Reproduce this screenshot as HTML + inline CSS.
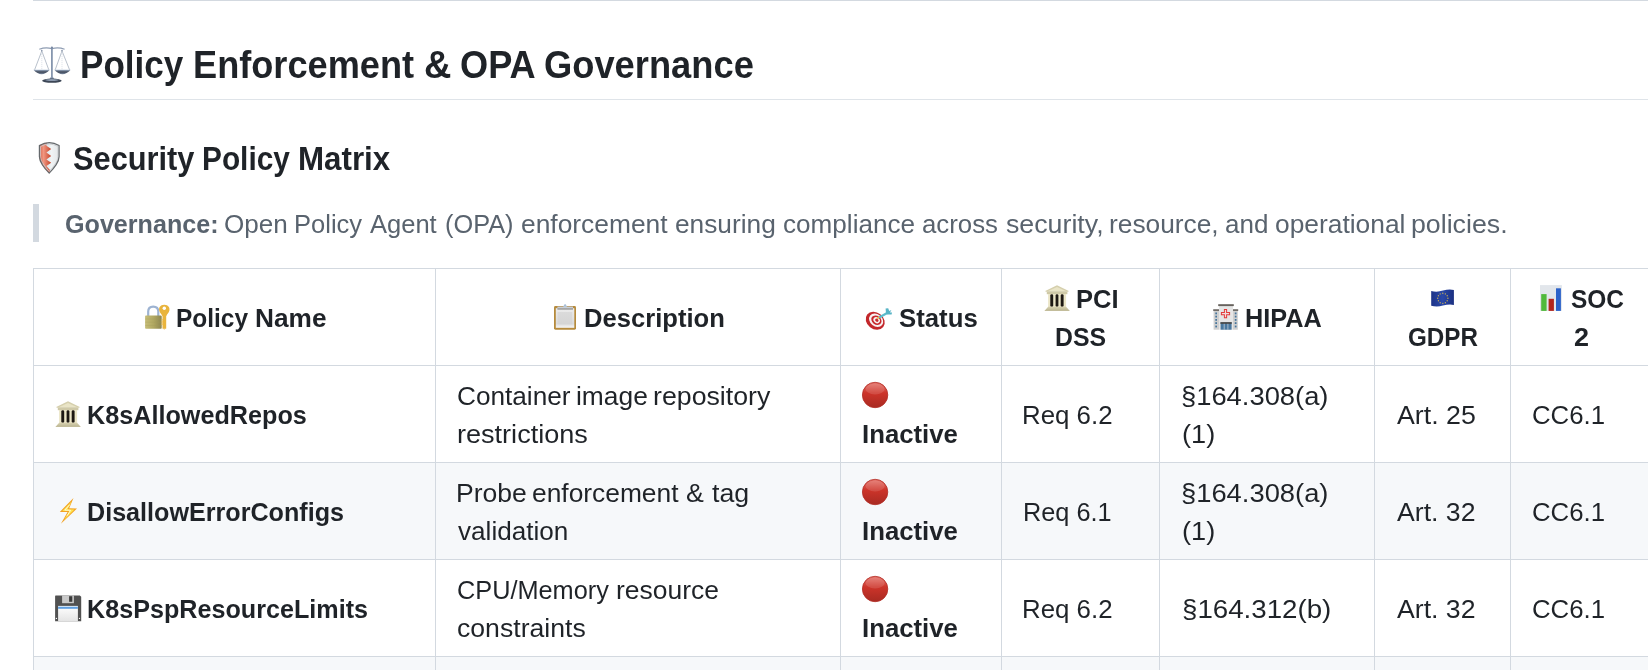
<!DOCTYPE html>
<html>
<head>
<meta charset="utf-8">
<title>Policy Enforcement &amp; OPA Governance</title>
<style>
html,body{margin:0;padding:0;background:#fff;}
body{width:1648px;height:670px;overflow:hidden;position:relative;font-family:"Liberation Sans",sans-serif;color:#1f2328;}
.ln{position:absolute;background:#d3d9e0;}
.bg{position:absolute;left:34px;width:1614px;height:96px;background:#f6f8fa;}
.x{position:absolute;white-space:nowrap;line-height:1;transform-origin:0 0;font-family:"Liberation Sans",sans-serif;}
.a{font-size:38.4px;font-weight:bold;}
.b{font-size:32.6px;font-weight:bold;}
.c{font-size:25.6px;font-weight:bold;}
.d{font-size:25.6px;font-weight:normal;}
#txt{position:absolute;left:0;top:0;width:1648px;height:670px;will-change:transform;}
svg.e{position:absolute;overflow:visible;}
</style>
</head>
<body>
<!-- top rule, h2 underline, blockquote bar -->
<div class="ln" style="left:33px;top:0;width:1615px;height:1px"></div>
<div class="ln" style="left:33px;top:99px;width:1615px;height:1px;background:#dfe4e9"></div>
<div class="ln" style="left:33px;top:204px;width:6px;height:38px"></div>
<!-- table grid -->
<div class="bg" style="top:463px"></div>
<div class="bg" style="top:657px"></div>
<div class="ln" style="left:33px;top:268px;width:1615px;height:1px"></div>
<div class="ln" style="left:33px;top:365px;width:1615px;height:1px"></div>
<div class="ln" style="left:33px;top:462px;width:1615px;height:1px"></div>
<div class="ln" style="left:33px;top:559px;width:1615px;height:1px"></div>
<div class="ln" style="left:33px;top:656px;width:1615px;height:1px"></div>
<div class="ln" style="left:33px;top:268px;width:1px;height:402px"></div>
<div class="ln" style="left:435px;top:268px;width:1px;height:402px"></div>
<div class="ln" style="left:840px;top:268px;width:1px;height:402px"></div>
<div class="ln" style="left:1001px;top:268px;width:1px;height:402px"></div>
<div class="ln" style="left:1159px;top:268px;width:1px;height:402px"></div>
<div class="ln" style="left:1374px;top:268px;width:1px;height:402px"></div>
<div class="ln" style="left:1510px;top:268px;width:1px;height:402px"></div>
<div id="txt">
<span class="x a" style="left:79.51px;top:46.00px;transform:scaleX(0.9129)">Policy</span>
<span class="x a" style="left:193.04px;top:46.00px;transform:scaleX(0.9422)">Enforcement</span>
<span class="x a" style="left:424.11px;top:46.00px;transform:scaleX(0.9884)">&amp;</span>
<span class="x a" style="left:459.87px;top:46.00px;transform:scaleX(0.9422)">OPA</span>
<span class="x a" style="left:544.37px;top:46.00px;transform:scaleX(0.9458)">Governance</span>
<span class="x b" style="left:73.27px;top:143.00px;transform:scaleX(0.9447)">Security</span>
<span class="x b" style="left:201.88px;top:143.00px;transform:scaleX(0.9156)">Policy</span>
<span class="x b" style="left:298.04px;top:143.00px;transform:scaleX(0.9609)">Matrix</span>
<span class="x c" style="left:64.71px;top:212.00px;color:#59636e;transform:scaleX(0.9816)">Governance:</span>
<span class="x d" style="left:223.78px;top:212.00px;color:#59636e;transform:scaleX(1.0185)">Open</span>
<span class="x d" style="left:293.81px;top:212.00px;color:#59636e;transform:scaleX(0.9972)">Policy</span>
<span class="x d" style="left:370.20px;top:212.00px;color:#59636e;transform:scaleX(0.9972)">Agent</span>
<span class="x d" style="left:444.81px;top:212.00px;color:#59636e;transform:scaleX(0.9897)">(OPA)</span>
<span class="x d" style="left:520.58px;top:212.00px;color:#59636e;transform:scaleX(1.0305)">enforcement</span>
<span class="x d" style="left:675.18px;top:212.00px;color:#59636e;transform:scaleX(1.0264)">ensuring</span>
<span class="x d" style="left:782.68px;top:212.00px;color:#59636e;transform:scaleX(1.0200)">compliance</span>
<span class="x d" style="left:921.89px;top:212.00px;color:#59636e;transform:scaleX(1.0081)">across</span>
<span class="x d" style="left:1005.68px;top:212.00px;color:#59636e;transform:scaleX(1.0450)">security,</span>
<span class="x d" style="left:1109.06px;top:212.00px;color:#59636e;transform:scaleX(1.0281)">resource,</span>
<span class="x d" style="left:1224.99px;top:212.00px;color:#59636e;transform:scaleX(1.0154)">and</span>
<span class="x d" style="left:1275.08px;top:212.00px;color:#59636e;transform:scaleX(1.0299)">operational</span>
<span class="x d" style="left:1411.43px;top:212.00px;color:#59636e;transform:scaleX(1.0443)">policies.</span>
<span class="x c" style="left:176.17px;top:306.00px;transform:scaleX(0.9557)">Policy</span>
<span class="x c" style="left:254.86px;top:306.00px;transform:scaleX(1.0254)">Name</span>
<span class="x c" style="left:584.30px;top:306.00px;transform:scaleX(1.0001)">Description</span>
<span class="x c" style="left:899.00px;top:306.00px;transform:scaleX(1.0065)">Status</span>
<span class="x c" style="left:1075.81px;top:287.00px;transform:scaleX(0.9959)">PCI</span>
<span class="x c" style="left:1055.15px;top:325.00px;transform:scaleX(0.9710)">DSS</span>
<span class="x c" style="left:1244.92px;top:306.00px;transform:scaleX(0.9873)">HIPAA</span>
<span class="x c" style="left:1407.54px;top:325.00px;transform:scaleX(0.9467)">GDPR</span>
<span class="x c" style="left:1571.12px;top:287.00px;transform:scaleX(0.9563)">SOC</span>
<span class="x c" style="left:1573.56px;top:325.00px;transform:scaleX(1.0547)">2</span>
<span class="x c" style="left:86.92px;top:403.00px;transform:scaleX(0.9846)">K8sAllowedRepos</span>
<span class="x d" style="left:456.87px;top:384.00px;transform:scaleX(1.0230)">Container</span>
<span class="x d" style="left:576.05px;top:384.00px;transform:scaleX(1.0300)">image</span>
<span class="x d" style="left:653.23px;top:384.00px;transform:scaleX(1.0442)">repository</span>
<span class="x d" style="left:456.51px;top:422.00px;transform:scaleX(1.0572)">restrictions</span>
<span class="x c" style="left:861.99px;top:422.00px;transform:scaleX(1.0064)">Inactive</span>
<span class="x d" style="left:1022.48px;top:403.00px;transform:scaleX(1.0101)">Req 6.2</span>
<span class="x d" style="left:1181.12px;top:384.00px;transform:scaleX(1.0683)">§164.308(a)</span>
<span class="x d" style="left:1181.73px;top:422.00px;transform:scaleX(1.0604)">(1)</span>
<span class="x d" style="left:1397.20px;top:403.00px;transform:scaleX(1.0461)">Art. 25</span>
<span class="x d" style="left:1531.59px;top:403.00px;transform:scaleX(1.0068)">CC6.1</span>
<span class="x c" style="left:86.93px;top:500.00px;transform:scaleX(0.9823)">DisallowErrorConfigs</span>
<span class="x d" style="left:456.13px;top:481.00px;transform:scaleX(1.0372)">Probe</span>
<span class="x d" style="left:532.28px;top:481.00px;transform:scaleX(1.0298)">enforcement</span>
<span class="x d" style="left:686.46px;top:481.00px;transform:scaleX(1.0438)">&amp;</span>
<span class="x d" style="left:712.10px;top:481.00px;transform:scaleX(1.0454)">tag</span>
<span class="x d" style="left:458.20px;top:519.00px;transform:scaleX(1.0204)">validation</span>
<span class="x c" style="left:861.99px;top:519.00px;transform:scaleX(1.0064)">Inactive</span>
<span class="x d" style="left:1022.52px;top:500.00px;transform:scaleX(0.9882)">Req 6.1</span>
<span class="x d" style="left:1181.12px;top:481.00px;transform:scaleX(1.0683)">§164.308(a)</span>
<span class="x d" style="left:1181.73px;top:519.00px;transform:scaleX(1.0604)">(1)</span>
<span class="x d" style="left:1397.20px;top:500.00px;transform:scaleX(1.0407)">Art. 32</span>
<span class="x d" style="left:1531.59px;top:500.00px;transform:scaleX(1.0068)">CC6.1</span>
<span class="x c" style="left:86.93px;top:597.00px;transform:scaleX(0.9829)">K8sPspResourceLimits</span>
<span class="x d" style="left:457.01px;top:578.00px;transform:scaleX(0.9888)">CPU/Memory</span>
<span class="x d" style="left:616.44px;top:578.00px;transform:scaleX(1.0344)">resource</span>
<span class="x d" style="left:457.37px;top:616.00px;transform:scaleX(1.0402)">constraints</span>
<span class="x c" style="left:861.99px;top:616.00px;transform:scaleX(1.0064)">Inactive</span>
<span class="x d" style="left:1022.48px;top:597.00px;transform:scaleX(1.0101)">Req 6.2</span>
<span class="x d" style="left:1181.60px;top:597.00px;transform:scaleX(1.0816)">§164.312(b)</span>
<span class="x d" style="left:1397.20px;top:597.00px;transform:scaleX(1.0407)">Art. 32</span>
<span class="x d" style="left:1531.59px;top:597.00px;transform:scaleX(1.0068)">CC6.1</span>
</div>
<!-- emoji -->
<svg class="e" style="left:0;top:0" width="1648" height="670" viewBox="0 0 1648 670">
<defs>
<linearGradient id="gRed" x1="0" y1="0" x2="0" y2="1"><stop offset="0" stop-color="#e4746b"/><stop offset="0.42" stop-color="#cd342a"/><stop offset="1" stop-color="#a82a22"/></linearGradient>
<linearGradient id="gLock" x1="0" y1="0" x2="1" y2="0"><stop offset="0" stop-color="#c6bd78"/><stop offset="0.5" stop-color="#b1a862"/><stop offset="1" stop-color="#8d8650"/></linearGradient>
<linearGradient id="gShR" x1="0" y1="0" x2="1" y2="0"><stop offset="0" stop-color="#dd6044"/><stop offset="0.35" stop-color="#f09680"/><stop offset="1" stop-color="#c6442a"/></linearGradient>
<linearGradient id="gShW" x1="0" y1="0" x2="1" y2="0"><stop offset="0" stop-color="#b5cdd6"/><stop offset="0.6" stop-color="#f1f4f5"/><stop offset="1" stop-color="#e3e6e8"/></linearGradient>
<linearGradient id="gPan" x1="0" y1="0" x2="0" y2="1"><stop offset="0" stop-color="#9fb2cb"/><stop offset="0.5" stop-color="#3e4757"/><stop offset="1" stop-color="#7d8ca3"/></linearGradient>
<linearGradient id="gPaper" x1="0" y1="0" x2="0" y2="1"><stop offset="0" stop-color="#ececec"/><stop offset="0.8" stop-color="#dcdcdc"/><stop offset="1" stop-color="#f6f6f6"/></linearGradient>
<linearGradient id="gLabel" x1="0" y1="0" x2="0" y2="1"><stop offset="0" stop-color="#ffffff"/><stop offset="1" stop-color="#e4e4e4"/></linearGradient>
<linearGradient id="gFlag" x1="0" y1="0" x2="1" y2="0"><stop offset="0" stop-color="#1d3488"/><stop offset="0.5" stop-color="#2a48a8"/><stop offset="1" stop-color="#1b2f80"/></linearGradient>
<g id="bank">
<path d="M1045.2,290.9 L1057,285.3 L1068.8,290.9 L1068.2,291.8 L1045.8,291.8 Z" fill="#d5cfad"/>
<path d="M1048.2,291 L1057,286.9 L1065.8,291 Z" fill="#e9e4c6"/>
<rect x="1046.8" y="291.6" width="20.6" height="2.6" fill="#cfc9a7"/>
<rect x="1048.1" y="294" width="18" height="13" fill="#ece6c8"/>
<rect x="1050.3" y="294.2" width="2.9" height="12.6" rx="1.3" fill="#1d1813"/>
<rect x="1055.6" y="294.2" width="2.8" height="12.6" rx="1.3" fill="#1d1813"/>
<rect x="1060.7" y="294.2" width="2.9" height="12.6" rx="1.3" fill="#1d1813"/>
<path d="M1048.1,306.8 L1066.1,306.8 L1069.7,310.9 L1044.5,310.9 Z" fill="#d2ccaa"/>
<path d="M1047,308.6 L1067.3,308.6 L1069.7,310.9 L1044.5,310.9 Z" fill="#c3bd9b"/>
</g>
<g id="dot">
<circle cx="875.1" cy="395" r="12.7" fill="url(#gRed)" stroke="#b22c25" stroke-width="0.8"/>
<ellipse cx="875.1" cy="389" rx="9.6" ry="5.4" fill="#fff" opacity="0.13"/>
</g>
</defs>

<!-- scales -->
<g>
<path d="M41.8,51 L34.6,69.8 M41.8,51 L48.8,69.8 M62,51 L55.2,69.8 M62,51 L69.6,69.8" stroke="#9aa5b4" stroke-width="0.7" fill="none"/>
<path d="M41.8,52 L41.8,70 M62,52 L62,70" stroke="#d3dae3" stroke-width="0.7" fill="none" stroke-dasharray="1.2 0.8"/>
<path d="M39.3,49.2 Q45.5,46.9 51.9,48.6 Q58.5,46.9 64.6,49.2" stroke="#8e9cb2" stroke-width="1.1" fill="none"/>
<circle cx="41.8" cy="50.6" r="0.8" fill="#8492a8"/><circle cx="62" cy="50.6" r="0.8" fill="#8492a8"/>
<rect x="51.05" y="47" width="1.7" height="32.2" fill="#8091ab"/>
<circle cx="51.9" cy="47.6" r="1.1" fill="#7a8aa4"/>
<path d="M49.4,79.2 Q51.9,74 54.4,79.2 Z" fill="#8797af"/>
<path d="M33.4,69.8 L49.8,69.8 Q41.6,78.6 33.4,69.8 Z" fill="url(#gPan)"/>
<path d="M54.3,69.8 L70.7,69.8 Q62.5,78.6 54.3,69.8 Z" fill="url(#gPan)"/>
<ellipse cx="51.9" cy="80.7" rx="9.8" ry="2.1" fill="#3d4756"/>
<ellipse cx="51.9" cy="80" rx="6.6" ry="0.8" fill="#a7b7cd"/>
</g>

<!-- shield -->
<g>
<path d="M39.4,145.6 Q49.2,139.8 59.1,145.6 L59.1,156.6 C58.9,160.4 57.8,162.4 56.2,164.7 C54.2,167.7 51.9,170.5 49.2,173.1 C46.5,170.5 44.2,167.7 42.3,164.7 C40.7,162.4 39.6,160.4 39.4,156.6 Z" fill="url(#gShW)"/>
<path d="M39.4,145.6 Q43.2,143.4 46.8,142.8 L46.4,145.8 L51.2,149 L46.4,152.6 L51.2,155.9 L46.4,159.5 L51.2,162.8 L46.4,166.1 L50.2,170.2 L49.2,173.1 C46.5,170.5 44.2,167.7 42.3,164.7 C40.7,162.4 39.6,160.4 39.4,156.6 Z" fill="url(#gShR)"/>
<path d="M40.6,146.5 Q49.2,141.6 57.9,146.5 L57.9,156.5 C57.7,159.8 56.7,161.8 55.2,164 C53.4,166.7 51.5,169.1 49.2,171.4 C46.9,169.1 45,166.7 43.3,164 C41.8,161.8 40.8,159.8 40.6,156.5 Z" fill="none" stroke="#c9cdd0" stroke-width="1" opacity="0.85"/>
<path d="M39.4,145.6 Q49.2,139.8 59.1,145.6 L59.1,156.6 C58.9,160.4 57.8,162.4 56.2,164.7 C54.2,167.7 51.9,170.5 49.2,173.1 C46.5,170.5 44.2,167.7 42.3,164.7 C40.7,162.4 39.6,160.4 39.4,156.6 Z" fill="none" stroke="#65696c" stroke-width="1.2"/>
</g>

<!-- lock with key -->
<g>
<path d="M148.2,316.5 L148.2,311.6 Q148.2,306.6 153.2,306.6 Q158.3,306.6 158.3,311.6 L158.3,316.5" fill="none" stroke="#9db3d2" stroke-width="2.2"/>
<rect x="145.1" y="315.6" width="16.6" height="13.1" rx="0.8" fill="url(#gLock)"/>
<path d="M145.1,319 H161.7 M145.1,322.2 H161.7 M145.1,325.4 H161.7" stroke="#a39a58" stroke-width="0.5" opacity="0.6"/>
<path d="M164.3,304.8 C168.6,304.8 170,308 169.4,310.6 C168.8,313 167,314.6 166.2,316 L162.5,316 C161.6,314.6 159.8,313 159.2,310.6 C158.6,308 160,304.8 164.3,304.8 Z" fill="#e9b43c"/>
<rect x="162.5" y="314" width="3.7" height="14.6" fill="#e9b43c"/>
<path d="M162.5,319 L160.9,319.8 L162.5,320.8 L160.9,322 L162.5,323 L160.9,324.2 L162.5,325.2 Z" fill="#e9b43c"/>
<path d="M162.5,328.6 L164.3,329.6 L166.2,328.6 Z" fill="#e9b43c"/>
<circle cx="164.3" cy="308.3" r="1.7" fill="#fff"/>
</g>

<!-- clipboard -->
<g>
<rect x="554" y="306.1" width="22" height="23.6" rx="1.4" fill="#b68b3d"/>
<rect x="555.8" y="308.2" width="18.5" height="19.6" fill="url(#gPaper)"/>
<rect x="557.6" y="312" width="14.6" height="12.4" fill="#cfcfcf" opacity="0.55"/>
<path d="M563.2,307 Q565.1,300.8 567,307 Z" fill="#a9c0d8"/>
<rect x="557.4" y="306.6" width="15.6" height="1.7" fill="#c7ced6"/>
<rect x="557.4" y="308.2" width="15.6" height="1.5" fill="#9b9b9b"/>
</g>

<!-- dart -->
<g>
<g transform="rotate(38 875.2 320.8)">
<ellipse cx="875.2" cy="320.8" rx="10.2" ry="8.3" fill="#c3272b"/>
<ellipse cx="875.6" cy="319.8" rx="7.6" ry="6.1" fill="#f7f1f1"/>
<ellipse cx="875.8" cy="319.6" rx="5.5" ry="4.4" fill="#c8282c"/>
<ellipse cx="876" cy="319.4" rx="3.5" ry="2.8" fill="#f7f1f1"/>
<ellipse cx="876.1" cy="319.3" rx="1.8" ry="1.5" fill="#c8282c"/>
</g>
<path d="M877.2,318.6 L880.2,316.6" stroke="#e8c040" stroke-width="1.3"/>
<path d="M880,316.9 L887.2,313" stroke="#5cbccc" stroke-width="2.3" stroke-linecap="round"/>
<path d="M886,313.4 L885.6,308.6 L888.2,308.2 L889.2,311 L891.4,310 L890,312.6 L892,312.6 L891.6,314.4 L887,314.6 Z" fill="#58b4c6"/>
</g>

<!-- bank (PCI header) and bank (row 1) -->
<use href="#bank"/>
<use href="#bank" transform="translate(-989 116)"/>

<!-- hospital -->
<g>
<rect x="1213.6" y="309.6" width="5.6" height="20.1" fill="#cfcfcf"/>
<rect x="1232.8" y="309.6" width="5" height="20.1" fill="#cfcfcf"/>
<rect x="1213.2" y="309.3" width="6" height="1.6" fill="#67625d"/>
<rect x="1232.8" y="309.3" width="5.4" height="1.6" fill="#67625d"/>
<rect x="1219" y="304.8" width="14" height="24.9" fill="#e6e6e6"/>
<rect x="1218.2" y="304.2" width="15.6" height="1.9" fill="#67625d"/>
<g fill="#46759c">
<rect x="1215.3" y="312.5" width="1.7" height="1.8"/><rect x="1215.3" y="315.7" width="1.7" height="1.8"/><rect x="1215.3" y="319" width="1.7" height="1.8"/><rect x="1215.3" y="322.2" width="1.7" height="1.8"/><rect x="1215.3" y="325.6" width="1.7" height="1.8"/>
<rect x="1234.8" y="312.5" width="1.7" height="1.8"/><rect x="1234.8" y="315.7" width="1.7" height="1.8"/><rect x="1234.8" y="319" width="1.7" height="1.8"/><rect x="1234.8" y="322.2" width="1.7" height="1.8"/><rect x="1234.8" y="325.6" width="1.7" height="1.8"/>
</g>
<path d="M1223.9,309 h3.2 v3 h3 v3.2 h-3 v3 h-3.2 v-3 h-3 v-3.2 h3 Z" fill="#e23b3b"/>
<path d="M1224.9,310 h1.2 v3 h3 v1.2 h-3 v3 h-1.2 v-3 h-3 v-1.2 h3 Z" fill="#f1dcdc"/>
<rect x="1220.6" y="322.4" width="11" height="7.3" fill="#4a789f"/>
<rect x="1220.4" y="322.2" width="11.4" height="1.6" fill="#4a4540"/>
<path d="M1224.2,323.8 V329.7 M1227.9,323.8 V329.7" stroke="#d5dde4" stroke-width="0.7"/>
</g>

<!-- EU flag -->
<g>
<path d="M1431.2,291 Q1437,292.6 1443,290.6 Q1449.5,288.8 1453.9,290.1 L1453.9,305 Q1449.5,303.8 1443,305.6 Q1437,307.4 1431.2,305.8 Z" fill="url(#gFlag)"/>
<g fill="#c7ad55">
<circle cx="1442.8" cy="293.2" r="0.68"/><circle cx="1445.4" cy="293.9" r="0.68"/><circle cx="1447.2" cy="295.7" r="0.68"/><circle cx="1447.9" cy="298.3" r="0.68"/><circle cx="1447.2" cy="300.8" r="0.68"/><circle cx="1445.4" cy="302.7" r="0.68"/><circle cx="1442.8" cy="303.4" r="0.68"/><circle cx="1440.2" cy="302.7" r="0.68"/><circle cx="1438.4" cy="300.8" r="0.68"/><circle cx="1437.7" cy="298.3" r="0.68"/><circle cx="1438.4" cy="295.7" r="0.68"/><circle cx="1440.2" cy="293.9" r="0.68"/>
</g>
</g>

<!-- bar chart -->
<g>
<rect x="1540" y="285.1" width="21.9" height="25.8" fill="#e2e6eb"/>
<rect x="1541.2" y="294.1" width="5.4" height="16.8" fill="#50b93b"/>
<rect x="1548.6" y="298.8" width="5.3" height="12.1" fill="#b3241c"/>
<rect x="1556" y="288.3" width="4.9" height="22.6" fill="#2b61c9"/>
</g>

<!-- lightning -->
<g>
<path d="M73.5,498 L59.8,511.9 L67.6,511.9 L60.9,523.7 L77,508.5 L69.2,508.3 Z" fill="#f2a324"/>
<path d="M71.6,501.6 L62.3,510.9 L69.4,510.9 L64,520 L74.4,509.5 L67.6,509.3 Z" fill="#ffe450"/>
<path d="M69.6,504.8 L64.8,510.1 L70.6,510.3 L67,515.8" fill="none" stroke="#fffbe0" stroke-width="0.9"/>
</g>

<!-- floppy -->
<g>
<path d="M55.8,595.4 L79.8,595.4 L81.2,596.8 L81.2,621.2 L55.1,621.2 L55.1,596.1 Q55.1,595.4 55.8,595.4 Z" fill="#515151"/>
<rect x="62.1" y="595.4" width="11.8" height="7.8" fill="#c9c9c9"/>
<rect x="69.1" y="596.2" width="3.2" height="5.6" fill="#3b3b3b"/>
<rect x="58.1" y="605.9" width="19.8" height="15.3" fill="url(#gLabel)"/>
<rect x="58.1" y="606.7" width="19.8" height="2.1" fill="#5f9fe1"/>
<circle cx="56.4" cy="618.4" r="0.65" fill="#fff"/><circle cx="79.5" cy="618.4" r="0.65" fill="#fff"/>
</g>

<!-- red status dots -->
<use href="#dot"/>
<use href="#dot" transform="translate(0 97)"/>
<use href="#dot" transform="translate(0 194)"/>
</svg>
</body>
</html>
